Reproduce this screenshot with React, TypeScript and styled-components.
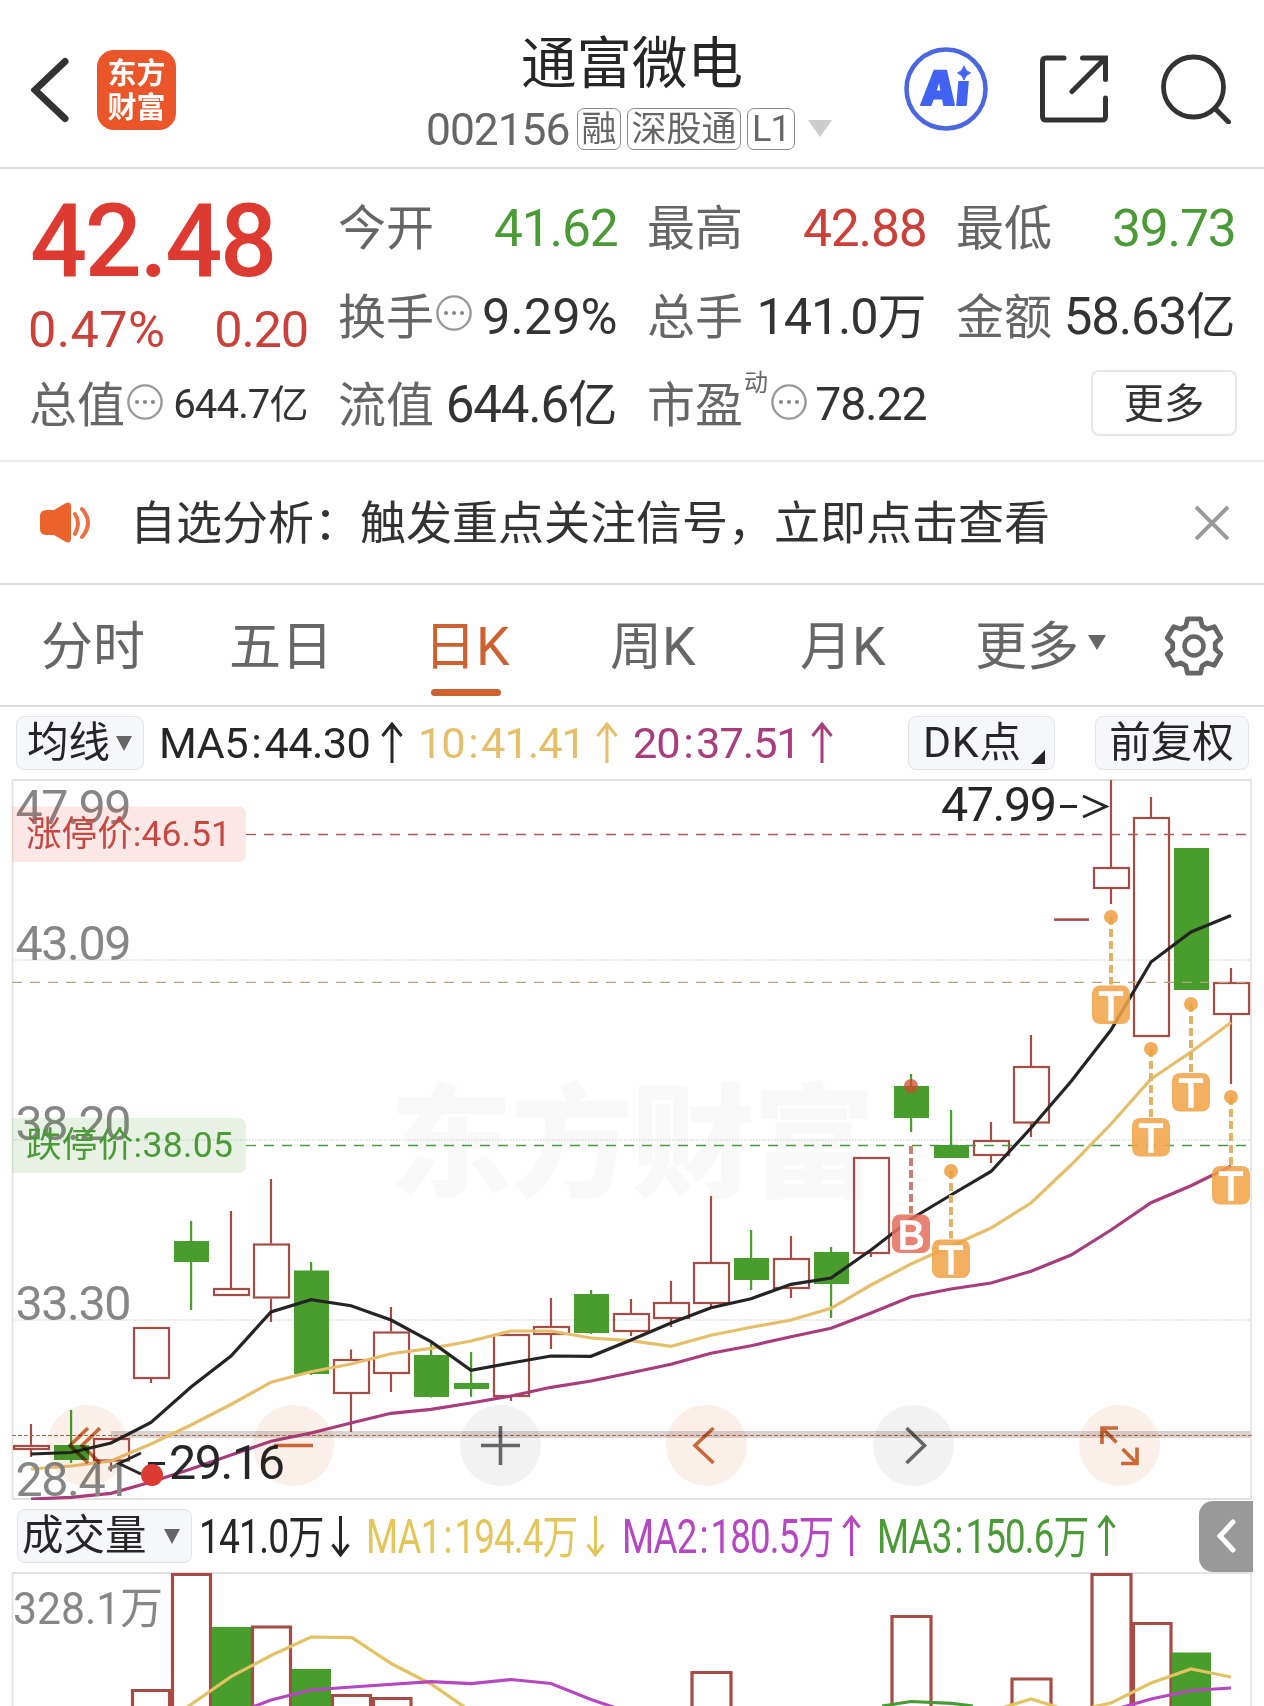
import React from 'react';
import styled, { createGlobalStyle } from 'styled-components';

const FONT = '"Noto Sans CJK SC", "Noto Sans", sans-serif';
const DIGITS = 'Roboto, "Noto Sans CJK SC", sans-serif';
const RED = '#cb4139';
const UP = '#a54c45';
const GREEN = '#4a9a36';
const FILL = '#489d2c';
const INK = '#333';
const GRAY = '#666';
const ORANGE = '#cc622f';
const GOLD = '#e6be6a';
const YELLOW = '#e4c55a';
const PLUM = '#a93c7d';
const VIOLET = '#b548c0';

const Global = createGlobalStyle`
  * { box-sizing: border-box; }
  body { margin: 0; background: #fefefe; }
  svg { display: block; flex: none; }
`;

const Page = styled.main`
  width: 1264px;
  height: 1706px;
  overflow: hidden;
  background: #fefefe;
  font-family: ${FONT};
  color: ${INK};
  white-space: nowrap;
`;

/* Latin letters and digits set inside Chinese text, on the same baseline */
const Num = styled.span<{ $track?: number }>`
  font-family: ${DIGITS};
  font-size: 1.031em;
  line-height: 1;
  letter-spacing: ${(p) => p.$track ?? -0.023}em;
`;

const Colon = styled.span`
  margin: 0 0.08em;
`;

/* ---------- header ---------- */

const Header = styled.header`
  display: grid;
  grid-template-columns: 1fr 406px 1fr;
  height: 169px;
  border-bottom: 2px solid #d9d9d9;
`;

const HeaderLeft = styled.div`
  display: flex;
  align-items: center;
  gap: 28px;
  height: 179px;
  padding-left: 31px;
`;

const HeaderRight = styled.div`
  display: flex;
  justify-content: flex-end;
  align-items: center;
  height: 178px;
  padding-right: 33px;
`;

const AppLogo = styled.div`
  display: flex;
  flex-direction: column;
  align-items: center;
  width: 79px;
  height: 80px;
  padding-top: 4px;
  border-radius: 17px;
  background: #ea5529;
  color: #fff;
  font-size: 29px;
  font-weight: 700;
  line-height: 34px;
`;

const TitleBlock = styled.div`
  display: flex;
  flex-direction: column;
  align-items: center;
`;

const Title = styled.h1`
  margin: 25px 0 0 0;
  height: 83px;
  font-size: 55.5px;
  font-weight: 400;
  line-height: 68px;
  color: #262626;
`;

const CodeRow = styled.div`
  display: flex;
  align-items: flex-start;
  gap: 6px;
  width: 406px;
  height: 42px;
  color: ${GRAY};
`;

const Code = styled.span`
  width: 145px;
  margin-left: -3px;
  font-size: 43px;
  line-height: 35px;
`;

const Tag = styled.span<{ $w: number }>`
  width: ${(p) => p.$w}px;
  height: 42px;
  border: 1.5px solid #8a8a8a;
  border-radius: 7px;
  font-size: 35px;
  line-height: 33px;
  text-align: center;
`;

const Caret = styled.i<{ $w: number; $h: number; $c?: string }>`
  flex: none;
  border-left: ${(p) => p.$w / 2}px solid transparent;
  border-right: ${(p) => p.$w / 2}px solid transparent;
  border-top: ${(p) => p.$h}px solid ${(p) => p.$c ?? GRAY};
`;

const CodeCaret = styled(Caret)`
  margin: 12px 0 0 7px;
`;

/* ---------- quote ---------- */

const Quote = styled.section`
  display: grid;
  grid-template-columns: repeat(4, 278px);
  grid-template-rows: repeat(3, 88.5px);
  column-gap: 31px;
  height: 293px;
  padding: 11px 29px 0 30px;
  border-bottom: 2px solid #ececec;
`;

const PriceCell = styled.div`
  grid-row: span 2;
`;

const Price = styled.div`
  width: 245px;
  height: 105px;
  font-size: 99px;
  font-weight: 500;
  line-height: 107px;
  letter-spacing: -1px;
  color: #dd3b32;

  & > span {
    display: inline-block;
    transform: scaleX(0.985);
    transform-origin: left center;
  }
`;

const Change = styled.div`
  display: flex;
  justify-content: space-between;
  height: 81px;
  margin-left: -2px;
  font-size: 49px;
  line-height: 81px;
  color: ${RED};
`;

const Cell = styled.div`
  display: flex;
  align-items: center;
  line-height: 86px;
`;

const Label = styled.span`
  margin-left: -1px;
  font-size: 48px;
  color: ${GRAY};
`;

const Value = styled.span<{ $c?: string; $size?: number }>`
  margin-left: auto;
  margin-right: -0.5px;
  font-size: ${(p) => p.$size ?? 50}px;
  color: ${(p) => p.$c ?? INK};
`;

const Sup = styled.sup`
  align-self: flex-start;
  width: 25px;
  margin-left: 1px;
  font-size: 24px;
  line-height: 48px;
  color: ${GRAY};
`;

const MoreButton = styled.button`
  width: 146px;
  height: 66px;
  margin: 3px -2px 0 auto;
  padding: 0 0 4px;
  border: 2px solid #e6e6e6;
  border-radius: 8px;
  background: none;
  font: 40.5px/58px ${FONT};
  color: ${INK};
`;

/* ---------- notice ---------- */

const Notice = styled.section`
  display: flex;
  align-items: center;
  height: 123px;
  padding: 0 35px 0 39px;
  border-bottom: 2px solid #dcdcdc;
`;

const NoticeText = styled.p`
  flex: 1;
  margin: 0 0 8px 37px;
  font-size: 46px;
`;

/* ---------- tabs ---------- */

const Tabs = styled.nav`
  display: flex;
  height: 122px;
  padding-left: 41px;
  border-bottom: 2px solid #dcdcdc;
`;

const Tab = styled.a<{ $w: number; $on?: boolean }>`
  display: flex;
  flex-direction: column;
  align-items: flex-start;
  flex: none;
  width: ${(p) => p.$w}px;
  font-size: 52px;
  line-height: 104px;
  padding-top: 6px;
  color: ${(p) => (p.$on ? ORANGE : GRAY)};

  &::after {
    content: '';
    display: ${(p) => (p.$on ? 'block' : 'none')};
    width: 70px;
    height: 7px;
    margin: -6px 0 0 7px;
    border-radius: 4px;
    background: ${ORANGE};
  }
`;

const TabMore = styled(Tab)`
  flex-direction: row;
  align-items: center;
  align-self: flex-start;
  gap: 9px;
  padding-top: 0;
  line-height: 115px;
`;

/* ---------- indicator bars ---------- */

const Bar = styled.div`
  display: flex;
  align-items: center;
  gap: 15px;
  height: 72px;
  padding: 0 15px 0 16px;
  font-size: 42px;
`;

const VolumeBar = styled(Bar)`
  gap: 18.5px;
  padding: 0 11px 0 17px;
  font-size: 46px;
`;

const Chip = styled.button<{ $w: number; $mr?: number; $wide?: boolean }>`
  display: flex;
  align-items: center;
  justify-content: ${(p) => (p.$wide ? 'space-between' : 'center')};
  gap: 6px;
  flex: none;
  width: ${(p) => p.$w}px;
  height: 54px;
  margin-right: ${(p) => p.$mr ?? 0}px;
  padding: ${(p) => (p.$wide ? '0 11px 0 4px' : '0 11px 0 10px')};
  border: 1.5px solid #e2e4e8;
  border-radius: 8px;
  background: #f6f7fa;
  font: 41.5px/44px ${FONT};
  color: #262626;

  & > span { height: 52px; }
`;

const Corner = styled.i`
  align-self: flex-end;
  margin: 0 -6px 5px 4px;
  border-left: 14px solid transparent;
  border-bottom: 14px solid #262626;
`;

const Spacer = styled.div`
  flex: 1;
`;

const Average = styled.div<{ $w: number; $c: string }>`
  display: flex;
  align-items: center;
  justify-content: space-between;
  flex: none;
  width: ${(p) => p.$w}px;
  color: ${(p) => p.$c};
`;

const AverageText = styled.span<{ $x?: number; $dx?: number }>`
  width: 0;
  margin: 0 0 6px ${(p) => p.$dx ?? 0}px;
  line-height: 60px;
  transform: scaleX(${(p) => p.$x ?? 1});
  transform-origin: left center;
`;

const Drawer = styled.div`
  display: flex;
  align-items: center;
  justify-content: center;
  width: 54px;
  height: 71px;
  margin-left: auto;
  border-radius: 14px 0 0 14px;
  background: #999;
`;

/* ---------- charts ---------- */

const ChartArea = styled.section`
  position: relative;
  height: 721px;
`;

const Tools = styled.div`
  position: absolute;
  left: 47px;
  right: 104px;
  bottom: 14px;
  display: flex;
  justify-content: space-between;
  mix-blend-mode: multiply;
`;

const Tool = styled.button<{ $muted?: boolean }>`
  width: 81px;
  height: 81px;
  padding: 0;
  border: 0;
  border-radius: 50%;
  background: ${(p) => (p.$muted ? '#f3f3f3' : '#fcf1ea')};
  color: ${(p) => (p.$muted ? GRAY : '#cc6838')};
`;

/* x centre of the i-th candle */
const cx = (i: number) => 31 + 40 * i;

/* [rising, high, body top, body bottom, low] */
const candles: [number, number, number, number, number][] = [
  [1, 1424, 1445, 1450, 1457], [0, 1410, 1445, 1460, 1463], [1, 1438, 1438, 1461.5, 1471.5],
  [1, 1327, 1327, 1379, 1383], [0, 1221, 1241, 1262, 1310], [1, 1211, 1288, 1296, 1296],
  [1, 1179, 1243.5, 1298.5, 1322], [0, 1262, 1270.5, 1374, 1375], [1, 1349.5, 1359, 1394, 1432],
  [1, 1307, 1331.5, 1374, 1392], [0, 1343, 1355, 1397, 1397.5], [0, 1352, 1383, 1389, 1397],
  [1, 1334, 1334, 1397, 1401], [1, 1298, 1326, 1335, 1349], [0, 1290, 1294, 1333, 1334],
  [1, 1299, 1313, 1332, 1336], [1, 1281, 1302, 1319, 1327], [1, 1196, 1262, 1304, 1308],
  [0, 1230, 1258, 1280, 1290], [1, 1236, 1258, 1289, 1298], [0, 1247, 1252, 1284, 1318],
  [1, 1157, 1157, 1254, 1257], [0, 1074, 1086, 1118, 1132], [0, 1110, 1145, 1158, 1158],
  [1, 1122, 1140, 1156, 1163], [1, 1035, 1066, 1123.5, 1137], [1, 918.5, 918.5, 921, 921],
  [1, 780, 867, 889, 904], [1, 797, 817, 1037, 1037], [0, 848, 848, 990, 990],
  [1, 968, 982, 1015, 1084],
];

const ma5 = [1454, 1452.5, 1443, 1422.5, 1387, 1356, 1312, 1299.7, 1305.7, 1320, 1341.7, 1370.3, 1363, 1356, 1356.3, 1340, 1323, 1307.7, 1298.7, 1284.3, 1278, 1250, 1219, 1195, 1171.5, 1128, 1081.5, 1030, 962, 932, 915.5];
const ma10 = [1469, 1466, 1461, 1444, 1425, 1404.5, 1382.3, 1371.7, 1364, 1353.7, 1348.3, 1341, 1331, 1331, 1338, 1340.7, 1346.3, 1335.3, 1327.3, 1320, 1308.3, 1285, 1264, 1246, 1228, 1203, 1165, 1124, 1079, 1052, 1022.5];
const ma20 = [1499, 1497.3, 1493.3, 1482, 1469, 1455, 1441.3, 1433, 1423, 1413.3, 1409.3, 1403, 1396, 1387.3, 1381, 1372.7, 1364.3, 1353.3, 1345.7, 1336.7, 1328.3, 1313, 1296.7, 1289, 1283, 1271.3, 1255, 1230, 1202.7, 1185.7, 1166];

const line = (ys: number[]) => ys.map((y, i) => `${cx(i)},${y}`).join(' ');

/* [candle index, dot y, stem start, badge top, letter] */
const marks: [number, number, number, number, string][] = [
  [22, 1086, 1146, 1214.5, 'B'], [23, 1171, 1171, 1239.5, 'T'], [27, 917, 917, 985.5, 'T'],
  [28, 1049, 1049, 1118, 'T'], [29, 1004, 1004, 1073, 'T'], [30, 1097, 1097, 1166, 'T'],
];

/* [left, right, top, rising] */
const volumes: [number, number, number, number][] = [
  [131, 171, 1689, 1], [171, 212, 1573, 1], [212, 251, 1627, 0], [251, 292, 1625.5, 1],
  [292, 331, 1669, 0], [331, 372, 1694, 1], [372, 412.5, 1697, 1], [690.5, 732.5, 1671, 1],
  [890.5, 932.5, 1615, 1], [1010.5, 1052.5, 1677.5, 1], [1090.5, 1132.5, 1573, 1],
  [1132, 1172.5, 1622, 1], [1172, 1211, 1652.5, 0],
];

const CandleChart = () => (
  <svg width="1264" height="721" viewBox="0 779 1264 721" fontFamily={DIGITS}>
    <g fontFamily={FONT} fontSize="123" fontWeight="900" fill="#f8f8f8" textAnchor="middle">
      {['东', '方', '财', '富'].map((c, i) => <text key={c} x={451 + 121 * i} y="1187">{c}</text>)}
    </g>
    <g stroke="#dcdcdc" strokeWidth="1.5" strokeDasharray="1.5 1.5">
      <path d="M12 960H1251M12 1140H1251M12 1320H1251" />
    </g>
    <path d="M12.5 1499V780M1251 780V1499" fill="none" stroke="#e2e2e2" strokeWidth="1.6" />
    <path d="M12 780H1252M12 1499H1252" stroke="#e2e2e2" strokeWidth="2" />
    <path d="M111 1434.5H1251" stroke="#d9d3d1" strokeWidth="7" />

    {candles.map(([up, hi, top, bot, lo], i) => {
      const x = cx(i);
      if (i === 26) return <rect key={i} x={x - 17} y="918.3" width="35" height="2.6" fill={UP} />;
      return up ? (
        <g key={i} stroke={UP} strokeWidth="2.2" fill="none">
          <path d={`M${x} ${hi}V${top}M${x} ${bot}V${lo}`} />
          <rect x={x - 17} y={top + 1} width="35" height={bot - top - 2} />
        </g>
      ) : (
        <g key={i} fill={FILL}>
          <rect x={x - 17} y={top} width="35" height={bot - top} />
          <rect x={x - 1} y={hi} width="2.2" height={lo - hi} />
        </g>
      );
    })}

    <path d="M12 982.3H1251" stroke="#bda27b" strokeWidth="1.2" strokeDasharray="10 8" />
    <path d="M246 834.5H1251" stroke="#ad5853" strokeWidth="1.3" strokeDasharray="10 8" />
    <path d="M246 1145.5H1251" stroke="#4a9a46" strokeWidth="1.3" strokeDasharray="10 8" />
    <path d="M12 1435.5H1252" stroke="#ab6552" strokeWidth="1.2" strokeDasharray="4 2" />

    <g fill="none" strokeWidth="3.2">
      <polyline points={line(ma20)} stroke={PLUM} />
      <polyline points={line(ma10)} stroke={GOLD} />
      <polyline points={line(ma5)} stroke="#242424" />
    </g>

    {marks.map(([i, dot, stem, top, t]) => {
      const x = cx(i);
      const buy = t === 'B';
      return (
        <g key={i}>
          <path d={`M${x} ${stem}V${top - 1}`} stroke={buy ? '#cf7f70' : '#dfb265'} strokeWidth="4" strokeDasharray="8 4" />
          <circle cx={x} cy={dot} r="7" fill={buy ? '#d0492f' : '#f0a040'} opacity={buy ? 0.75 : 0.85} />
          <rect x={x - 19} y={top} width="38" height="38.5" rx="8" fill={buy ? '#e5705f' : '#f0a347'} opacity="0.87" />
          <text x={x} y={top + 34} textAnchor="middle" fontFamily='"Liberation Sans", Arial, sans-serif' fontSize="40" fill="#fff" stroke="#fff" strokeWidth="1.6">{t}</text>
        </g>
      );
    })}

    <g fontSize="48.5" fill="#868686">
      <text x="15.5" y="824" textLength="116">47.99</text>
      <text x="15.5" y="960" textLength="116">43.09</text>
      <text x="15.5" y="1140" textLength="116">38.20</text>
      <text x="15.5" y="1320" textLength="116">33.30</text>
      <text x="15.5" y="1496" textLength="116">28.41</text>
    </g>

    <path d="M12 806.5H239a7 7 0 0 1 7 7V855a7 7 0 0 1 -7 7H12Z" fill="#e0403a" fillOpacity="0.12" />
    <path d="M12 1118H239a7 7 0 0 1 7 7V1166a7 7 0 0 1 -7 7H12Z" fill="#3f9f30" fillOpacity="0.12" />
    <g fontSize="35.5">
      <text x="26" y="845.5" textLength="205" fill="#c64840">涨停价:46.51</text>
      <text x="26" y="1156.5" textLength="207" fill={GREEN}>跌停价:38.05</text>
    </g>

    <g fontSize="48.5" fill="#262626">
      <text x="941" y="821" textLength="116">47.99</text>
      <text x="169" y="1479" textLength="116">29.16</text>
    </g>
    <g fill="none" stroke="#262626" strokeWidth="3">
      <path d="M1060 806.5H1077M1083 796L1106 806.5L1083 817" />
      <path d="M148 1463.5H165M141 1453L119 1463.5L141 1474" />
    </g>
    <circle cx="152" cy="1475" r="11" fill="#dd3a31" />
  </svg>
);

const VolumeChart = () => (
  <svg width="1264" height="134" viewBox="0 1572 1264 134" fontFamily={DIGITS}>
    <path d="M12 1573H1252" stroke="#e2e2e2" strokeWidth="2" />
    <path d="M12.5 1572V1706M1251 1572V1706" stroke="#e2e2e2" strokeWidth="1.6" />
    <text x="13" y="1623.5" fontSize="44" fill="#868686" textLength="150" lengthAdjust="spacingAndGlyphs">328.1万</text>
    {volumes.map(([l, r, top, up]) => up
      ? <path key={l} d={`M${l + 1.5} 1710V${top + 1.5}H${r - 1.5}V1710`} fill="none" stroke={UP} strokeWidth="3.2" />
      : <rect key={l} x={l} y={top} width={r - l} height="90" fill={FILL} />)}
    <g fill="none" strokeWidth="3.2">
      <path d="M882 1706L911 1701.5L952 1703.3L973 1706" stroke={GREEN} />
      <path d="M186 1708L231 1676.7L271 1655.5L311 1637L352 1637.7L392 1664L431 1684L466 1708M1002 1708L1031 1699L1060 1708M1088 1708L1111 1703L1151 1683L1191 1669L1231 1677" stroke="#e2c262" />
      <path d="M250 1708L271 1700L311 1690L352 1687L431 1681.7L471 1683.7L511 1679.5L551 1683.5L591 1699.5L616 1708M1120 1708L1151 1699L1191 1690.5L1231 1688" stroke={VIOLET} />
    </g>
  </svg>
);

/* ---------- icons ---------- */

const DotsIcon = styled.svg`
  margin: 1px 0 0 2px;
`;

const Dots = () => (
  <DotsIcon width="36" height="36" viewBox="0 0 36 36">
    <circle cx="18" cy="18" r="16.6" fill="none" stroke="#999" strokeWidth="2.4" />
    <g fill="#888"><circle cx="10" cy="18" r="2.1" /><circle cx="18" cy="18" r="2.1" /><circle cx="26" cy="18" r="2.1" /></g>
  </DotsIcon>
);

const Arrow = ({ down, w = 22 }: { down?: boolean; w?: number }) => (
  <svg width={w} height="42" viewBox={`0 0 ${w} 42`}>
    <path
      d={down ? `M${w / 2} 1V39M1.5 ${39 - w / 2}L${w / 2} 40L${w - 1.5} ${39 - w / 2}` : `M${w / 2} 41V3M1.5 ${3 + w / 2}L${w / 2} 2L${w - 1.5} ${3 + w / 2}`}
      fill="none" stroke="currentColor" strokeWidth="3"
    />
  </svg>
);

const ShareIcon = styled.svg`
  margin-left: 52px;
`;

const SearchIcon = styled.svg`
  margin-left: 53px;
`;

const GearIcon = styled.svg`
  margin: 30px 0 0 1px;
`;

const gearPath = (() => {
  const pts: string[] = [];
  for (let k = 0; k < 6; k++) {
    const a = -90 + k * 60;
    [[-22, 21.5], [-13.5, 28], [13.5, 28], [22, 21.5]].forEach(([d, r]) => {
      const t = ((a + d) * Math.PI) / 180;
      pts.push(`${(31 + r * Math.cos(t)).toFixed(1)},${(31 + r * Math.sin(t)).toFixed(1)}`);
    });
  }
  return pts.join(' ');
})();

const icon = { fill: 'none', stroke: 'currentColor', strokeWidth: 3.6 };

export default function App() {
  return (
    <Page>
      <Global />
      <Header>
        <HeaderLeft>
          <svg width="38" height="66" viewBox="31 57 38 66"><path d="M65 61.500L35 90L65 118.500" fill="none" stroke="#333" strokeWidth="7" strokeLinecap="round" /></svg>
          <AppLogo><span>东方</span><span>财富</span></AppLogo>
        </HeaderLeft>
        <TitleBlock>
          <Title>通富微电</Title>
          <CodeRow>
            <Code><Num>002156</Num></Code>
            <Tag $w={44}>融</Tag>
            <Tag $w={114}>深股通</Tag>
            <Tag $w={48}><Num>L1</Num></Tag>
            <CodeCaret $w={24} $h={17} $c="#ccc" />
          </CodeRow>
        </TitleBlock>
        <HeaderRight>
          <svg width="84" height="84" viewBox="0 0 84 84">
            <circle cx="42" cy="42" r="39.500" fill="none" stroke="#4a66e0" strokeWidth="4.500" />
            <g fontFamily='Inter, "Liberation Sans", sans-serif' fontWeight="900" fill="#4263f2" stroke="#4263f2" strokeWidth="2" strokeLinejoin="round">
              <text transform="translate(16 58) skewX(-5)" fontSize="47" textLength="48" lengthAdjust="spacingAndGlyphs">Ai</text>
            </g>
            <path d="M50.500 16H68L72 22V34H53Z" fill="#fefefe" />
            <path d="M60 19Q61.500 24.500 66.500 26Q61.500 27.500 60 33Q58.500 27.500 53.500 26Q58.500 24.500 60 19Z" fill="#4263f2" stroke="#4263f2" strokeWidth="1" />
          </svg>
          <ShareIcon width="68" height="68" viewBox="1039 55.500 68 68">
            <path d="M1063 58.500H1045q-3.500 0-3.500 3.500V117q0 3.500 3.500 3.500H1101q3.500 0 3.500-3.500V98.500M1081.500 58.500H1104.500V80M1104 59L1071 92" fill="none" stroke="#333" strokeWidth="5" strokeLinecap="round" />
          </ShareIcon>
          <SearchIcon width="70" height="70" viewBox="1159.500 53 70 70">
            <circle cx="1192" cy="86" r="30" fill="none" stroke="#333" strokeWidth="4.800" />
            <path d="M1213.500 107.500L1227 121" stroke="#333" strokeWidth="5" strokeLinecap="round" />
          </SearchIcon>
        </HeaderRight>
      </Header>

      <Quote>
        <PriceCell>
          <Price><Num>42.48</Num></Price>
          <Change>
            <span><Num $track={0.008}>0.47%</Num></span>
            <span><Num>0.20</Num></span>
          </Change>
        </PriceCell>
        <Cell><Label>今开</Label><Value $c={GREEN}><Num>41.62</Num></Value></Cell>
        <Cell><Label>最高</Label><Value $c={RED}><Num>42.88</Num></Value></Cell>
        <Cell><Label>最低</Label><Value $c={GREEN}><Num>39.73</Num></Value></Cell>
        <Cell><Label>换手</Label><Dots /><Value $size={49}><Num $track={0}>9.29%</Num></Value></Cell>
        <Cell><Label>总手</Label><Value $size={49}><Num>141.0</Num>万</Value></Cell>
        <Cell><Label>金额</Label><Value $size={49.500}><Num>58.63</Num>亿</Value></Cell>
        <Cell><Label>总值</Label><Dots /><Value $size={39}><Num>644.7</Num>亿</Value></Cell>
        <Cell><Label>流值</Label><Value $size={49.500}><Num>644.6</Num>亿</Value></Cell>
        <Cell><Label>市盈</Label><Sup>动</Sup><Dots /><Value $size={45}><Num>78.22</Num></Value></Cell>
        <Cell><MoreButton>更多</MoreButton></Cell>
      </Quote>

      <Notice>
        <svg width="54" height="44" viewBox="39 500 54 44">
          <path d="M47 509H54L66 502Q71 500 71 506V537Q71 543 66 541L54 534H47Q40 534 40 528V515Q40 509 47 509Z" fill="#ec622b" />
          <path d="M75 513Q81 522 75 533M82 508Q94 522 82 536" fill="none" stroke="#ec7040" strokeWidth="4" strokeLinecap="round" />
        </svg>
        <NoticeText>自选分析：触发重点关注信号，立即点击查看</NoticeText>
        <svg width="34" height="34" viewBox="0 0 34 34"><path d="M1 1L33 33M33 1L1 33" stroke="#999" strokeWidth="4" /></svg>
      </Notice>

      <Tabs>
        <Tab $w={188}>分时</Tab>
        <Tab $w={195}>五日</Tab>
        <Tab $w={186} $on><span>日<Num>K</Num></span></Tab>
        <Tab $w={190}><span>周<Num>K</Num></span></Tab>
        <Tab $w={175}><span>月<Num>K</Num></span></Tab>
        <TabMore $w={187}>更多<Caret $w={18} $h={15} /></TabMore>
        <GearIcon width="62" height="62" viewBox="0 0 62 62">
          <polygon points={gearPath} fill="none" stroke={GRAY} strokeWidth="4.800" strokeLinejoin="round" />
          <circle cx="31" cy="31" r="9.500" fill="none" stroke={GRAY} strokeWidth="4.500" />
        </GearIcon>
      </Tabs>

      <Bar>
        <Chip $w={128}><span>均线</span><Caret $w={17} $h={15} /></Chip>
        <Average $w={244} $c="#262626"><AverageText><Num $track={-0.015}>MA5<Colon>:</Colon>44.30</Num></AverageText><Arrow /></Average>
        <Average $w={200} $c={GOLD}><AverageText><Num>10<Colon>:</Colon>41.41</Num></AverageText><Arrow /></Average>
        <Average $w={200} $c={PLUM}><AverageText><Num>20<Colon>:</Colon>37.51</Num></AverageText><Arrow /></Average>
        <Spacer />
        <Chip $w={147} $mr={25}><span><Num $track={0.02}>DK</Num>点</span><Corner /></Chip>
        <Chip $w={154}><span>前复权</span></Chip>
      </Bar>

      <ChartArea>
        <CandleChart />
        <Tools>
          <Tool><svg width="81" height="81" {...icon}><path d="M41 23L23 40.500L41 58M53 23L35 40.500L53 58" /></svg></Tool>
          <Tool><svg width="81" height="81" {...icon}><path d="M21 40.500H60" /></svg></Tool>
          <Tool $muted><svg width="81" height="81" {...icon}><path d="M21 40.500H60M40.500 21V60" /></svg></Tool>
          <Tool><svg width="81" height="81" {...icon}><path d="M47.500 23L29 40.500L47.500 58" /></svg></Tool>
          <Tool $muted><svg width="81" height="81" {...icon}><path d="M33.500 23L51.500 40.500L33.500 58" /></svg></Tool>
          <Tool><svg width="81" height="81" {...icon}><path d="M39 23H23V39M23 23L37.500 37.500M42 58.500H58V42.500M58 58.500L43.500 44" /></svg></Tool>
        </Tools>
      </ChartArea>

      <VolumeBar>
        <Chip $w={175} $mr={-12} $wide><span>成交量</span><Caret $w={17} $h={15} /></Chip>
        <Average $w={151} $c="#262626"><AverageText $x={0.785}><Num>141.0</Num>万</AverageText><Arrow down w={19} /></Average>
        <Average $w={237} $c={YELLOW}><AverageText $x={0.775} $dx={-2}><Num>MA1<Colon>:</Colon>194.4</Num>万</AverageText><Arrow down w={19} /></Average>
        <Average $w={237} $c={VIOLET}><AverageText $x={0.775} $dx={-2}><Num>MA2<Colon>:</Colon>180.5</Num>万</AverageText><Arrow w={19} /></Average>
        <Average $w={237} $c={GREEN}><AverageText $x={0.775} $dx={-2}><Num>MA3<Colon>:</Colon>150.6</Num>万</AverageText><Arrow w={19} /></Average>
        <Drawer><svg width="20" height="34" viewBox="0 0 20 34"><path d="M17 3L4 17L17 31" fill="none" stroke="#fff" strokeWidth="5" strokeLinecap="round" /></svg></Drawer>
      </VolumeBar>
      <VolumeChart />
    </Page>
  );
}
